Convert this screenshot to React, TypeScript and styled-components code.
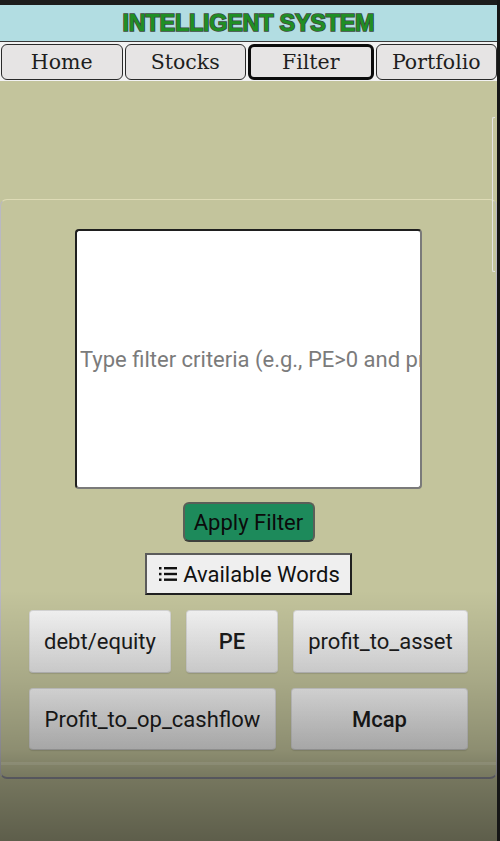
import React from "react";
import styled, { createGlobalStyle } from "styled-components";

const Global = createGlobalStyle`
  html, body { margin: 0; padding: 0; background: #161616; }
  body { font-family: Roboto, "Liberation Sans", sans-serif; }
  * { box-sizing: border-box; }
`;

const Screen = styled.div`
  position: relative;
  width: 497px;
  height: 841px;
  display: flex;
  flex-direction: column;
  background: #c3c49c;
  overflow: hidden;
`;

const StatusStrip = styled.div`
  height: 5px;
  background: #1c1c1c;
`;

const Header = styled.header`
  height: 37px;
  background: #b2dde2;
  display: flex;
  align-items: center;
  justify-content: center;
  border-bottom: 1px solid #3a3a3a;
`;

const Title = styled.h1`
  margin: 0;
  font-family: "Liberation Sans", Arial, sans-serif;
  font-weight: 900;
  font-size: 23.5px;
  letter-spacing: -0.3px;
  color: #1f8f24;
  -webkit-text-stroke: 1.6px #3b4a3d;
  paint-order: stroke fill;
`;

const Tabs = styled.nav`
  display: flex;
  gap: 2px;
  padding: 2px 0 0 1px;
  background: #f2f2f2;
  height: 39px;
`;

const Tab = styled.button<{ $active?: boolean }>`
  flex: 1;
  height: 36px;
  margin: 0;
  padding: 0;
  background: #e6e4e4;
  border: ${(p) => (p.$active ? "3px solid #0c0c0c" : "1px solid #2a2a2a")};
  border-radius: 6px;
  font-family: "DejaVu Serif", serif;
  font-size: 20.5px;
  color: #1e1e1e;
  cursor: pointer;
`;

const Body = styled.main`
  flex: 1;
  display: flex;
  flex-direction: column;
  padding-top: 118px;
  background: #c3c49c;
`;

const Panel = styled.section`
  width: 497px;
  border: 1px solid #b9b8c2;
  border-top-color: #dedbb6;
  border-bottom: 2px solid #8d8d98;
  border-radius: 7px;
  background: #c3c49c;
  display: flex;
  flex-direction: column;
  align-items: center;
  padding-top: 29px;
`;

const Criteria = styled.input`
  width: 347px;
  height: 260px;
  background: #ffffff;
  border: 2px solid #1f1f1f;
  border-right-color: #7a7a7a;
  border-bottom-color: #7a7a7a;
  border-radius: 4px;
  padding: 0 0 0 3px;
  font-family: Roboto, sans-serif;
  font-size: 22px;
  color: #222;
  outline: none;
  &::placeholder { color: #7b7b7b; }
`;

const ApplyButton = styled.button`
  margin-top: 13px;
  width: 132px;
  height: 40px;
  background: #1d8a5b;
  border: 2px solid #5a5f58;
  border-bottom-color: #3d403c;
  border-radius: 6px;
  font-family: Roboto, sans-serif;
  font-size: 22px;
  color: #0b0b0b;
  padding: 0;
`;

const WordsButton = styled.button`
  margin-top: 11px;
  width: 207px;
  height: 42px;
  display: flex;
  align-items: center;
  justify-content: center;
  gap: 6px;
  background: #efefef;
  border: 2px solid #5b5b5b;
  border-right-color: #202020;
  border-bottom-color: #202020;
  border-radius: 0;
  font-family: Roboto, sans-serif;
  font-size: 22px;
  color: #111;
  padding: 0 0 0 2px;
`;

const Grid = styled.div`
  margin-top: 15px;
  width: 439px;
  display: flex;
  flex-direction: column;
  gap: 15px;
`;

const Row = styled.div<{ $h: number }>`
  display: flex;
  gap: 15px;
  height: ${(p) => p.$h}px;
`;

const Word = styled.button<{ $w: number; $bold?: boolean }>`
  flex: 0 0 ${(p) => p.$w}px;
  height: 100%;
  background: linear-gradient(to bottom, #f6f6f6, #e6e6e6);
  border: 1px solid #d8d8d8;
  border-bottom-color: #c4c4c4;
  border-radius: 4px;
  box-shadow: 0 1px 1px rgba(0, 0, 0, 0.12);
  font-family: Roboto, sans-serif;
  font-size: 22px;
  font-weight: ${(p) => (p.$bold ? 500 : 400)};
  color: #1c1c1c;
  padding: 0;
`;

const PanelFoot = styled.div`
  margin-top: 12px;
  align-self: stretch;
  height: 15px;
  border-top: 3px solid rgba(255, 255, 240, 0.22);
`;

const ScrollHint = styled.div`
  position: absolute;
  right: 2px;
  top: 117px;
  width: 3px;
  height: 155px;
  border: 1px solid #e4e4e4;
  border-right: none;
  border-radius: 2px 0 0 2px;
`;

const Shade = styled.div`
  position: absolute;
  left: 0;
  right: 0;
  top: 590px;
  bottom: 0;
  pointer-events: none;
  background: linear-gradient(
    to bottom,
    rgba(0, 0, 0, 0) 0px,
    rgba(0, 0, 0, 0.14) 90px,
    rgba(0, 0, 0, 0.28) 160px,
    rgba(0, 0, 0, 0.4) 190px,
    rgba(0, 0, 0, 0.52) 251px
  );
`;

const ListIcon = () => (
  <svg width="18" height="16" viewBox="0 0 18 16" aria-hidden="true">
    <rect x="0" y="1" width="2.5" height="2.5" fill="#111" />
    <rect x="0" y="6.8" width="2.5" height="2.5" fill="#111" />
    <rect x="0" y="12.5" width="2.5" height="2.5" fill="#111" />
    <rect x="5" y="1" width="13" height="2.4" fill="#111" />
    <rect x="5" y="6.8" width="13" height="2.4" fill="#111" />
    <rect x="5" y="12.5" width="13" height="2.4" fill="#111" />
  </svg>
);

export default function App() {
  return (
    <>
      <Global />
      <Screen>
        <StatusStrip />
        <Header>
          <Title>INTELLIGENT SYSTEM</Title>
        </Header>
        <Tabs>
          <Tab>Home</Tab>
          <Tab>Stocks</Tab>
          <Tab $active>Filter</Tab>
          <Tab>Portfolio</Tab>
        </Tabs>
        <Body>
          <Panel>
            <Criteria placeholder="Type filter criteria (e.g., PE>0 and profit_to_asset>5)" />
            <ApplyButton>Apply Filter</ApplyButton>
            <WordsButton>
              <ListIcon />
              Available Words
            </WordsButton>
            <Grid>
              <Row $h={63}>
                <Word $w={142}>debt/equity</Word>
                <Word $w={92} $bold>PE</Word>
                <Word $w={175}>profit_to_asset</Word>
              </Row>
              <Row $h={62}>
                <Word $w={247}>Profit_to_op_cashflow</Word>
                <Word $w={177} $bold>Mcap</Word>
              </Row>
            </Grid>
            <PanelFoot />
          </Panel>
        </Body>
        <ScrollHint />
        <Shade />
      </Screen>
    </>
  );
}
